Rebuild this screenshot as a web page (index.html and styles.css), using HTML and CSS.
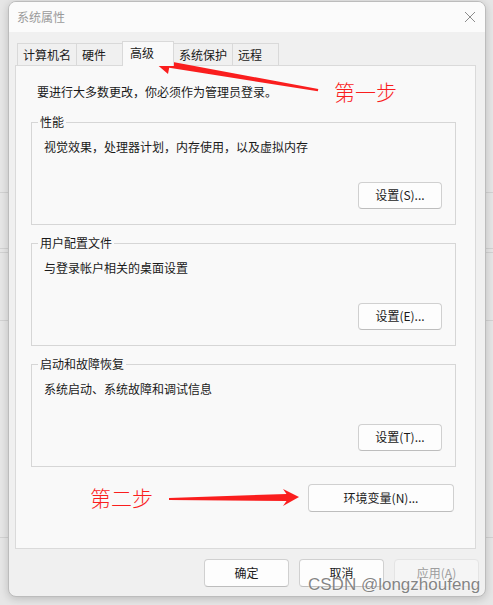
FILE: index.html
```html
<!DOCTYPE html>
<html lang="zh-CN">
<head>
<meta charset="utf-8">
<title>系统属性</title>
<link rel="stylesheet" href="styles.css">
</head>
<body>
<div class="desktop">
  <div class="window">
    <div class="titlebar">
      <span class="title">系统属性</span>
      <svg class="close" width="12" height="12" viewBox="0 0 12 12"><path d="M1 1 L11 11 M11 1 L1 11" stroke="#8c8c8c" stroke-width="1" fill="none"/></svg>
    </div>
    <div class="content">
      <div class="tabs">
        <div class="tab">计算机名</div>
        <div class="tab">硬件</div>
        <div class="tab active">高级</div>
        <div class="tab">系统保护</div>
        <div class="tab">远程</div>
      </div>
      <div class="panel">
        <p class="note">要进行大多数更改，你必须作为管理员登录。</p>
        <fieldset class="group">
          <legend>性能</legend>
          <p class="desc">视觉效果，处理器计划，内存使用，以及虚拟内存</p>
          <div class="actions"><button class="btn">设置(S)...</button></div>
        </fieldset>
        <fieldset class="group">
          <legend>用户配置文件</legend>
          <p class="desc">与登录帐户相关的桌面设置</p>
          <div class="actions"><button class="btn">设置(E)...</button></div>
        </fieldset>
        <fieldset class="group">
          <legend>启动和故障恢复</legend>
          <p class="desc">系统启动、系统故障和调试信息</p>
          <div class="actions"><button class="btn">设置(T)...</button></div>
        </fieldset>
        <div class="env-row"><button class="btn btn-env">环境变量(N)...</button></div>
      </div>
      <div class="footer">
        <button class="btn btn-foot">确定</button>
        <button class="btn btn-foot">取消</button>
        <button class="btn btn-foot disabled">应用(A)</button>
      </div>
    </div>
  </div>

  <svg class="annot" width="493" height="605" viewBox="0 0 493 605">
    <polygon fill="#fa1e1e" points="154,62 171.5,55.5 170.3,61.6 318.3,89 317.8,91.2 169.2,67.8 168,74"/>
    <polygon fill="#fa1e1e" points="299,497 283,489 286.5,494 169,498 169,500 286.5,501 283,506"/>
  </svg>
  <span class="step step1">第一步</span>
  <span class="step step2">第二步</span>
  <span class="watermark">CSDN @longzhoufeng</span>
</div>
</body>
</html>
```

FILE: styles.css
```css
* { box-sizing: border-box; }

html, body {
  margin: 0;
  padding: 0;
}

body {
  width: 493px;
  height: 605px;
  overflow: hidden;
  background-color: #e6e6e6;
  background-image:
    linear-gradient(#d2d2d2, #d2d2d2),
    linear-gradient(#d2d2d2, #d2d2d2),
    linear-gradient(#d2d2d2, #d2d2d2),
    linear-gradient(#d2d2d2, #d2d2d2),
    linear-gradient(#d2d2d2, #d2d2d2);
  background-repeat: no-repeat;
  background-size: 100% 1px;
  background-position: 0 192px, 0 248px, 0 252px, 0 320px, 0 537px;
  font-family: "Noto Sans CJK SC", "Noto Sans", sans-serif;
  font-size: 12px;
  color: #1a1a1a;
}

.desktop {
  position: relative;
  width: 493px;
  height: 605px;
  padding-top: 1px;
  padding-left: 8px;
}

.window {
  width: 478px;
  height: 596px;
  border: 1px solid #bcbcbc;
  border-radius: 8px;
  background: #f0f0f0;
  overflow: hidden;
  box-shadow: 0 2px 8px rgba(0, 0, 0, 0.18);
  display: flex;
  flex-direction: column;
}

.titlebar {
  height: 30px;
  flex: none;
  background: #fbfbfb;
  display: flex;
  align-items: center;
  justify-content: space-between;
  padding: 0 9px 1px 8px;
}

.title {
  color: #9a9a9a;
  font-size: 12px;
  line-height: 16px;
}

.close {
  display: block;
  width: 12px;
  height: 12px;
}

.content {
  flex: 1;
  display: flex;
  flex-direction: column;
  padding: 9px 8px 0 6px;
}

.tabs {
  display: flex;
  align-items: flex-end;
  height: 24px;
  padding-left: 2px;
}

.tab {
  height: 22px;
  min-width: 47px;
  padding: 0 5px;
  margin-left: -1px;
  border: 1px solid #d9d9d9;
  border-bottom: none;
  background: #f0f0f0;
  display: flex;
  align-items: center;
  line-height: 16px;
  white-space: nowrap;
}

.tab:first-child { margin-left: 0; }

.tab.active {
  position: relative;
  z-index: 1;
  height: 25px;
  min-width: 52px;
  padding: 0 7px 2px 7px;
  margin-bottom: -1px;
  background: #f9f9f9;
}

.panel {
  height: 484px;
  width: 461px;
  border: 1px solid #dadada;
  background: #f9f9f9;
  padding: 18px 19px 0 15px;
  display: flex;
  flex-direction: column;
}

.note {
  margin: 0 0 0 6px;
  line-height: 16px;
}

.group {
  margin: 14px 0 0 0;
  padding: 9px 13px 15px 12px;
  border: 1px solid #d6d6d6;
  min-width: 0;
}

.group + .group { margin-top: 10px; }

.group legend {
  padding: 0 2px;
  margin-left: -6px;
  line-height: 16px;
}

.desc {
  margin: 0;
  line-height: 16px;
}

.actions {
  display: flex;
  justify-content: flex-end;
  margin-top: 27px;
}

.btn {
  font-family: "Noto Sans CJK SC", "Noto Sans", sans-serif;
  font-size: 12px;
  color: #1a1a1a;
  width: 84px;
  height: 27px;
  padding: 0 0 1px 0;
  border: 1px solid #d0d0d0;
  border-bottom-color: #bdbdbd;
  border-radius: 4px;
  background: #fdfdfd;
  line-height: 16px;
}

.env-row {
  display: flex;
  justify-content: flex-end;
  margin-top: 17px;
  padding-right: 2px;
}

.btn-env {
  width: 146px;
  height: 28px;
}

.footer {
  display: flex;
  justify-content: flex-end;
  gap: 10px;
  margin-top: 10px;
  margin-right: -2px;
}

.btn-foot {
  width: 85px;
  height: 28px;
}

.btn.disabled {
  color: #9d9d9d;
  background: #f5f5f5;
  border-color: #e4e4e4;
}

.annot {
  position: absolute;
  left: 0;
  top: 0;
  pointer-events: none;
}

.step {
  position: absolute;
  font-family: "Noto Sans CJK SC", sans-serif;
  font-weight: 300;
  font-size: 21px;
  line-height: 21px;
  color: #fa1e1e;
  white-space: nowrap;
}

.step1 { left: 334px; top: 81px; }
.step2 { left: 90px; top: 487px; }

.watermark {
  position: absolute;
  left: 308px;
  top: 575px;
  font-family: "Liberation Sans", Arial, sans-serif;
  font-size: 17px;
  line-height: 20px;
  color: rgba(110, 110, 110, 0.85);
  text-shadow: 0 0 2px rgba(255, 255, 255, 0.9);
  white-space: nowrap;
}
```
